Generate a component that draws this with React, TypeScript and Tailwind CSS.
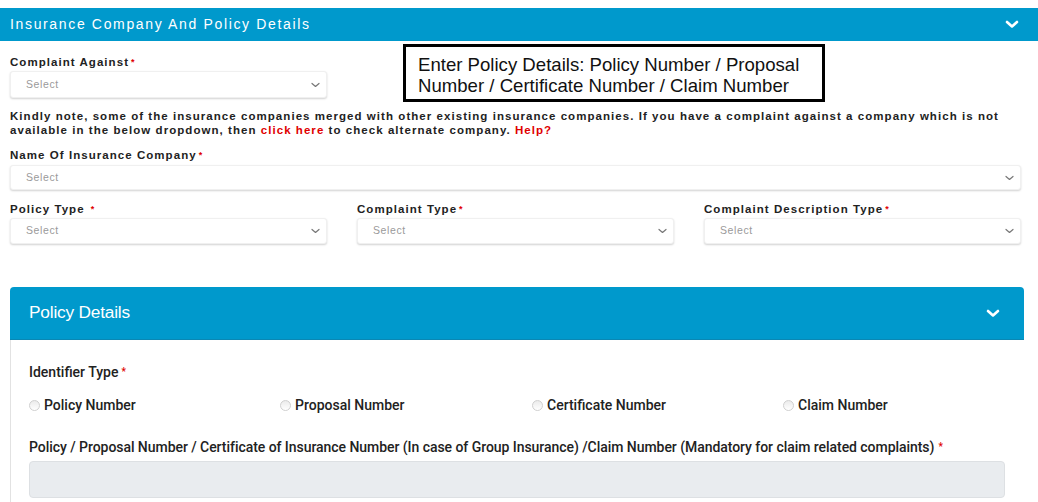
import React from "react";

const Chevron = ({ className = "" }: { className?: string }) => (
  <svg className={className} width="14" height="9" viewBox="0 0 14 9" fill="none">
    <path d="M2 2l5 4.5L12 2" stroke="white" strokeWidth="2.6" strokeLinecap="round" strokeLinejoin="round" />
  </svg>
);

const SmallChevron = () => (
  <svg width="9" height="6" viewBox="0 0 9 6" fill="none">
    <path d="M1 1.5l3.5 3 3.5-3" stroke="#777" strokeWidth="1.2" strokeLinecap="round" strokeLinejoin="round" />
  </svg>
);

const Select = ({ h = "h-[27px]", className = "" }: { h?: string; className?: string }) => (
  <div
    className={`${h} ${className} flex items-center justify-between rounded-[3px] bg-white pl-[15px] pr-[6px] shadow-[0_1px_2px_rgba(0,0,0,0.18)] border border-[#f0f0f0]`}
  >
    <span className="text-[10.5px] text-[#9a9a9a] tracking-[0.6px]" style={{ fontFamily: '"Liberation Sans", Arial, sans-serif' }}>
      Select
    </span>
    <SmallChevron />
  </div>
);

const Star = () => <span className="text-[#e00000] text-[9px] align-top ml-[2px]">*</span>;

const Label = ({ children }: { children: React.ReactNode }) => (
  <div className="h-[14px] leading-[14px] text-[11.5px] font-bold text-[#222] tracking-[1.05px] whitespace-nowrap">
    {children}
  </div>
);

const Radio = ({ label }: { label: string }) => (
  <div className="flex items-center">
    <span className="inline-block w-[11px] h-[11px] rounded-full border border-[#d0d0d0] bg-gradient-to-b from-[#ebebeb] to-white mr-[4px]" />
    <span className="text-[14px] font-medium text-[#222]">{label}</span>
  </div>
);

export default function App() {
  return (
    <div className="relative w-[1038px] h-[502px] bg-white overflow-hidden pt-[8px]">
      <div style={{ fontFamily: '"Liberation Sans", Arial, sans-serif' }}>
        <div className="h-[33px] bg-[#0099cc] flex items-center justify-between pl-[10px] pr-[19px]">
          <span className="text-white text-[14px] tracking-[1.65px]">Insurance Company And Policy Details</span>
          <Chevron />
        </div>
        <div className="px-[10px] w-[1031px]">
          <div className="mt-[14px]">
            <Label>
              Complaint Against<Star />
            </Label>
          </div>
          <Select className="mt-[2px] w-[317px]" />
          <div className="mt-[11px] text-[11.5px] leading-[14px] font-bold text-[#222] tracking-[1.05px] whitespace-nowrap">
            Kindly note, some of the insurance companies merged with other existing insurance companies. If you have a complaint against a company which is not
            <br />
            available in the below dropdown, then <span className="text-[#e00000]">click here</span> to check alternate company. <span className="text-[#e00000]">Help?</span>
          </div>
          <div className="mt-[11px]">
            <Label>
              Name Of Insurance Company<Star />
            </Label>
          </div>
          <Select h="h-[25px]" className="mt-[3px] w-[1011px]" />
          <div className="mt-[12px] grid grid-cols-[317px_317px_317px] gap-x-[30px]">
            <div>
              <Label>
                Policy Type <Star />
              </Label>
              <Select h="h-[26px]" className="mt-[2px]" />
            </div>
            <div>
              <Label>
                Complaint Type<Star />
              </Label>
              <Select h="h-[26px]" className="mt-[2px]" />
            </div>
            <div>
              <Label>
                Complaint Description Type<Star />
              </Label>
              <Select h="h-[26px]" className="mt-[2px]" />
            </div>
          </div>
        </div>
      </div>

      <div className="mt-[43px] ml-[10px] w-[1014px]" style={{ fontFamily: 'Roboto, "Liberation Sans", Arial, sans-serif' }}>
        <div className="h-[53px] bg-[#0099cc] rounded-t-[4px] flex items-center justify-between pl-[19px] pr-[24px] border-b border-[#0a87b3]">
          <span className="text-white text-[17.3px] tracking-[-0.2px]" style={{ fontFamily: '"Liberation Sans", Arial, sans-serif' }}>
            Policy Details
          </span>
          <Chevron />
        </div>
        <div className="border-l border-[#e2e2e2] pl-[18px] pr-[19px] pt-[24px] pb-[20px]">
          <div className="h-[16px] leading-[16px] text-[14px] font-medium text-[#222]">
            Identifier Type<span className="text-[#e00000] text-[10px] align-top ml-[3px]">*</span>
          </div>
          <div className="mt-[15px] h-[16px] flex">
            <div className="w-[251px]"><Radio label="Policy Number" /></div>
            <div className="w-[252px]"><Radio label="Proposal Number" /></div>
            <div className="w-[251px]"><Radio label="Certificate Number" /></div>
            <div><Radio label="Claim Number" /></div>
          </div>
          <div className="mt-[28px] h-[16px] leading-[16px] text-[14px] font-medium text-[#222] tracking-[-0.05px] whitespace-nowrap">
            Policy / Proposal Number / Certificate of Insurance Number (In case of Group Insurance) /Claim Number (Mandatory for claim related complaints)
            <span className="text-[#e00000] text-[10px] align-top ml-[4px]">*</span>
          </div>
          <div className="mt-[6px] h-[37px] w-[976px] bg-[#e9ecef] rounded-[4px] border border-[#dde0e3]" />
        </div>
      </div>

      <div
        className="absolute left-[403px] top-[44px] w-[422px] h-[58px] border-[3px] border-black bg-white pl-[12px] pt-[7px] text-[18.6px] leading-[21px] text-[#111]"
        style={{ fontFamily: '"Liberation Sans", Arial, sans-serif' }}
      >
        Enter Policy Details: Policy Number / Proposal
        <br />
        Number / Certificate Number / Claim Number
      </div>
    </div>
  );
}
